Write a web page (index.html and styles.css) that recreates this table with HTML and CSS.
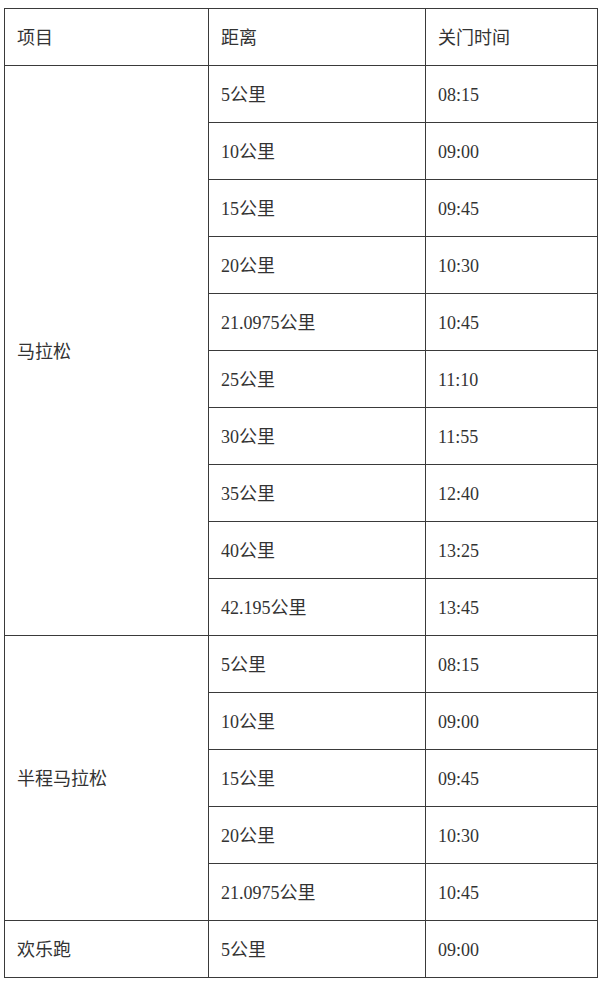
FILE: index.html
```html
<!DOCTYPE html>
<html lang="zh-CN">
<head>
<meta charset="utf-8">
<link rel="stylesheet" href="styles.css">
</head>
<body>
<table class="times">
  <colgroup>
    <col class="c1"><col class="c2"><col class="c3">
  </colgroup>
  <thead>
    <tr><th>项目</th><th>距离</th><th>关门时间</th></tr>
  </thead>
  <tbody>
    <tr><td rowspan="10">马拉松</td><td>5公里</td><td>08:15</td></tr>
    <tr><td>10公里</td><td>09:00</td></tr>
    <tr><td>15公里</td><td>09:45</td></tr>
    <tr><td>20公里</td><td>10:30</td></tr>
    <tr><td>21.0975公里</td><td>10:45</td></tr>
    <tr><td>25公里</td><td>11:10</td></tr>
    <tr><td>30公里</td><td>11:55</td></tr>
    <tr><td>35公里</td><td>12:40</td></tr>
    <tr><td>40公里</td><td>13:25</td></tr>
    <tr><td>42.195公里</td><td>13:45</td></tr>
    <tr><td rowspan="5">半程马拉松</td><td>5公里</td><td>08:15</td></tr>
    <tr><td>10公里</td><td>09:00</td></tr>
    <tr><td>15公里</td><td>09:45</td></tr>
    <tr><td>20公里</td><td>10:30</td></tr>
    <tr><td>21.0975公里</td><td>10:45</td></tr>
    <tr><td>欢乐跑</td><td>5公里</td><td>09:00</td></tr>
  </tbody>
</table>
</body>
</html>
```

FILE: styles.css
```css
html, body {
  margin: 0;
  padding: 0;
  background: #ffffff;
}
body {
  padding: 8px 0 0 4px;
}
.times {
  border-collapse: collapse;
  table-layout: fixed;
  width: 593px;
  font-family: "Liberation Serif", "Noto Sans CJK SC", serif;
  font-size: 18px;
  color: #333333;
}
.times col.c1 { width: 204px; }
.times col.c2 { width: 217px; }
.times col.c3 { width: 172px; }
.times tr {
  height: 57px;
}
.times th,
.times td {
  border: 1px solid #3a3a3a;
  padding: 2px 0 0 12px;
  text-align: left;
  vertical-align: middle;
  font-weight: normal;
  line-height: 22px;
}
```
